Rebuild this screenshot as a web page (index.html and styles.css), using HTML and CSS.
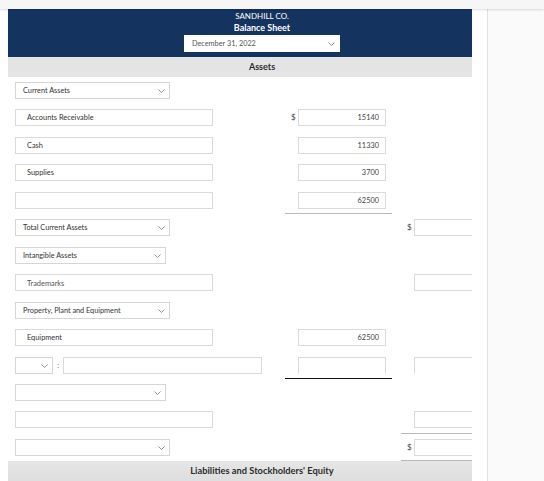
FILE: index.html
```html
<!DOCTYPE html>
<html lang="en">
<head>
<meta charset="utf-8">
<title>Balance Sheet</title>
<link rel="stylesheet" href="styles.css">
</head>
<body>
<div class="topbar"></div>
<div class="layout">
  <main class="panel">
    <div class="sheet">
      <header class="sheet-head">
        <div class="company">SANDHILL CO.</div>
        <div class="title">Balance Sheet</div>
        <div class="select date-select"><span>December 31, 2022</span><svg class="chev" viewBox="0 0 7 4"><path d="M0.5 0.5 L3.5 3.5 L6.5 0.5"/></svg></div>
      </header>
      <div class="section-bar">Assets</div>
      <div class="rows">
        <div class="row">
          <div class="c-label"><div class="select w155">Current Assets<svg class="chev" viewBox="0 0 7 4"><path d="M0.5 0.5 L3.5 3.5 L6.5 0.5"/></svg></div></div>
          <div class="c-mid"></div>
          <div class="c-right"></div>
        </div>
        <div class="row">
          <div class="c-label"><input class="label-input" value="Accounts Receivable" readonly></div>
          <div class="c-mid"><span class="dollar">$</span><input class="money" value="15140" readonly></div>
          <div class="c-right"></div>
        </div>
        <div class="row">
          <div class="c-label"><input class="label-input" value="Cash" readonly></div>
          <div class="c-mid"><input class="money" value="11330" readonly></div>
          <div class="c-right"></div>
        </div>
        <div class="row">
          <div class="c-label"><input class="label-input" value="Supplies" readonly></div>
          <div class="c-mid"><input class="money" value="3700" readonly></div>
          <div class="c-right"></div>
        </div>
        <div class="row">
          <div class="c-label"><input class="label-input" value="" readonly></div>
          <div class="c-mid rule-grey"><input class="money" value="62500" readonly></div>
          <div class="c-right"></div>
        </div>
        <div class="row">
          <div class="c-label"><div class="select w155">Total Current Assets<svg class="chev" viewBox="0 0 7 4"><path d="M0.5 0.5 L3.5 3.5 L6.5 0.5"/></svg></div></div>
          <div class="c-mid"></div>
          <div class="c-right"><span class="dollar">$</span><input class="money" value="" readonly></div>
        </div>
        <div class="row">
          <div class="c-label"><div class="select w151">Intangible Assets<svg class="chev" viewBox="0 0 7 4"><path d="M0.5 0.5 L3.5 3.5 L6.5 0.5"/></svg></div></div>
          <div class="c-mid"></div>
          <div class="c-right"></div>
        </div>
        <div class="row">
          <div class="c-label"><input class="label-input faint" value="Trademarks" readonly></div>
          <div class="c-mid"></div>
          <div class="c-right"><input class="money" value="" readonly></div>
        </div>
        <div class="row">
          <div class="c-label"><div class="select w155">Property, Plant and Equipment<svg class="chev" viewBox="0 0 7 4"><path d="M0.5 0.5 L3.5 3.5 L6.5 0.5"/></svg></div></div>
          <div class="c-mid"></div>
          <div class="c-right"></div>
        </div>
        <div class="row">
          <div class="c-label"><input class="label-input" value="Equipment" readonly></div>
          <div class="c-mid"><input class="money" value="62500" readonly></div>
          <div class="c-right"></div>
        </div>
        <div class="row">
          <div class="c-label split">
            <div class="select w38"><svg class="chev" viewBox="0 0 7 4"><path d="M0.5 0.5 L3.5 3.5 L6.5 0.5"/></svg></div>
            <span class="colon">:</span>
            <input class="label-input w199" value="" readonly>
          </div>
          <div class="c-mid rule-black"><input class="money open" value="" readonly></div>
          <div class="c-right"><input class="money open" value="" readonly></div>
        </div>
        <div class="row">
          <div class="c-label"><div class="select w151"><svg class="chev" viewBox="0 0 7 4"><path d="M0.5 0.5 L3.5 3.5 L6.5 0.5"/></svg></div></div>
          <div class="c-mid"></div>
          <div class="c-right"></div>
        </div>
        <div class="row">
          <div class="c-label"><input class="label-input" value="" readonly></div>
          <div class="c-mid"></div>
          <div class="c-right rule-grey"><input class="money" value="" readonly></div>
        </div>
        <div class="row">
          <div class="c-label"><div class="select w155"><svg class="chev" viewBox="0 0 7 4"><path d="M0.5 0.5 L3.5 3.5 L6.5 0.5"/></svg></div></div>
          <div class="c-mid"></div>
          <div class="c-right rule-grey"><span class="dollar">$</span><input class="money" value="" readonly></div>
        </div>
      </div>
      <div class="section-bar liab">Liabilities and Stockholders' Equity</div>
    </div>
  </main>
  <aside class="sidebar"></aside>
</div>
</body>
</html>
```
FILE: styles.css
```css
html, body {
  margin: 0;
  padding: 0;
  background: #ffffff;
  font-family: Lato, "Open Sans", "Liberation Sans", sans-serif;
  color: #333333;
  overflow: hidden;
}

.topbar {
  position: relative;
  z-index: 2;
  height: 9px;
  background: #f6f6f6;
  box-shadow: 0 1px 2px rgba(0, 0, 0, 0.14);
}

.layout {
  display: flex;
  height: 472px;
}

.panel {
  margin-left: 8px;
  width: 464px;
  flex: none;
  overflow: hidden;
}

.sheet {
  width: 508px;
}

.sidebar {
  flex: 1;
  margin-left: 15px;
  border-left: 1px solid #e2e2e2;
  background: #fafafa;
}

.sheet-head {
  background: #15335f;
  height: 48px;
  box-sizing: border-box;
  padding-top: 1px;
  display: flex;
  flex-direction: column;
  align-items: center;
  color: #ffffff;
}

.company {
  font-size: 8px;
  line-height: 12px;
}

.title {
  font-size: 9px;
  font-weight: 700;
  line-height: 12px;
}

.select {
  position: relative;
  box-sizing: border-box;
  height: 17px;
  border: 1px solid #d6d6d6;
  background: #ffffff;
  font-size: 7.3px;
  line-height: 15px;
  padding-left: 7px;
  color: #333333;
  white-space: nowrap;
}

.date-select {
  margin-top: 1px;
  width: 156px;
  color: #555555;
  border-color: #ffffff;
}

.chev {
  position: absolute;
  right: 4px;
  top: 6px;
  width: 7px;
  height: 4px;
  fill: none;
  stroke: #7a7a7a;
  stroke-width: 0.8;
}

.w155 { width: 155px; }
.w151 { width: 151px; }
.w38 { width: 38px; }
.w199 { width: 199px !important; }

.section-bar {
  background: #e4e4e4;
  height: 20px;
  line-height: 20px;
  text-align: center;
  font-size: 9px;
  font-weight: 700;
  color: #2b2b2b;
}

.liab {
  background: linear-gradient(#e6e6e6, #dedede);
  font-size: 9.3px;
}

.rows {
  display: flex;
  flex-direction: column;
}

.row {
  display: grid;
  grid-template-columns: 268px 107px 107px;
  column-gap: 9px;
  height: 27.46px;
  box-sizing: border-box;
}

.c-label {
  padding: 5px 0 0 7px;
}

.c-label.split {
  display: flex;
  align-items: flex-start;
}

.colon {
  font-size: 7px;
  line-height: 17px;
  width: 10px;
  text-align: center;
  color: #444444;
}

.c-mid, .c-right {
  display: flex;
  justify-content: flex-end;
  align-items: flex-start;
  padding: 5px 6px 0 0;
  box-sizing: border-box;
}

.c-right {
  justify-content: flex-start;
  padding-left: 13px;
}

.c-right .dollar {
  margin-left: -7px;
}

.rule-grey {
  border-bottom: 1px solid #b9b9b9;
}

.rule-black {
  border-bottom: 1px solid #111111;
}

.dollar {
  font-size: 8px;
  line-height: 17px;
  color: #444444;
  margin-right: 3px;
  width: 4px;
}

input {
  display: block;
  margin: 0;
  box-sizing: border-box;
  height: 17px;
  border: 1px solid #dadada;
  border-radius: 0;
  background: #ffffff;
  font-family: Lato, "Open Sans", "Liberation Sans", sans-serif;
  font-size: 7.4px;
  color: #333333;
  outline: none;
}

.label-input {
  width: 198px;
  padding: 0 0 0 11px;
}

.label-input.faint {
  color: #555555;
  padding-top: 2px;
}

.money {
  width: 88px;
  text-align: right;
  padding: 0 6px 0 0;
  color: #444444;
}

.money.open {
  border-bottom-color: #ffffff;
}
```
